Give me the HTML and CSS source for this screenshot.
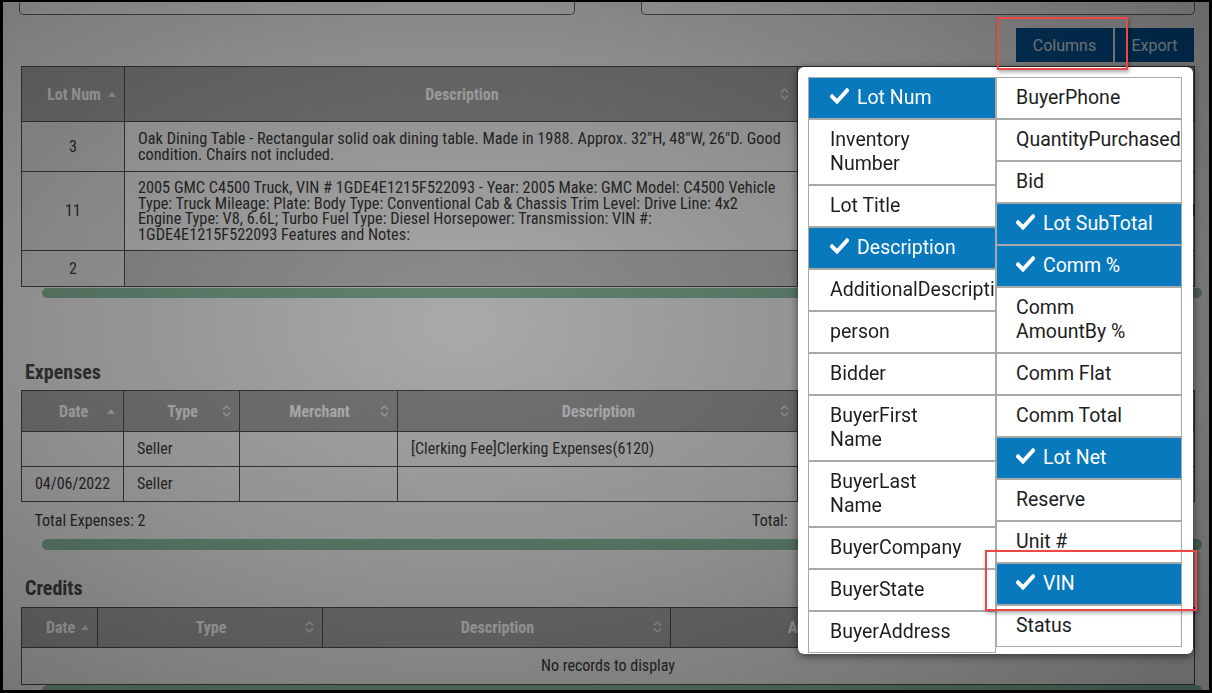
FILE: index.html
```html
<!DOCTYPE html>
<html lang="en">
<head>
    <meta charset="UTF-8">
    <title>Settlement - Lots</title>
    <link rel="stylesheet" href="styles.css">
</head>
<body>
    <div class="page">
        <div class="filters">
            <div class="filter-box filter-left"></div>
            <div class="filter-box filter-right"></div>
        </div>

        <div class="toolbar">
            <button class="tool-btn btn-columns">Columns</button>
            <button class="tool-btn btn-export">Export</button>
        </div>

        <!-- lots grid -->
        <table class="grid-table lots">
            <colgroup>
                <col style="width: 103px">
                <col style="width: 673px">
                <col style="width: 100px">
                <col style="width: 98px">
                <col style="width: 100px">
                <col>
            </colgroup>
            <thead>
                <tr>
                    <th class="sorted"><div class="th-in"><span></span><span>Lot Num</span><span class="sort-asc"></span></div></th>
                    <th><div class="th-in"><span></span><span>Description</span><svg class="sort-both" viewBox="0 0 9 14"><path d="M1 5.5 4.5 2 8 5.5M1 8.5 4.5 12 8 8.5"/></svg></div></th>
                    <th><div class="th-in"><span></span><span>Lot SubTotal</span><svg class="sort-both" viewBox="0 0 9 14"><path d="M1 5.5 4.5 2 8 5.5M1 8.5 4.5 12 8 8.5"/></svg></div></th>
                    <th><div class="th-in"><span></span><span>Comm %</span><svg class="sort-both" viewBox="0 0 9 14"><path d="M1 5.5 4.5 2 8 5.5M1 8.5 4.5 12 8 8.5"/></svg></div></th>
                    <th><div class="th-in"><span></span><span>Lot Net</span><svg class="sort-both" viewBox="0 0 9 14"><path d="M1 5.5 4.5 2 8 5.5M1 8.5 4.5 12 8 8.5"/></svg></div></th>
                    <th><div class="th-in"><span></span><span>VIN</span><svg class="sort-both" viewBox="0 0 9 14"><path d="M1 5.5 4.5 2 8 5.5M1 8.5 4.5 12 8 8.5"/></svg></div></th>
                </tr>
            </thead>
            <tbody>
                <tr class="row-short">
                    <td class="num sorted-cell">3</td>
                    <td class="desc">Oak Dining Table - Rectangular solid oak dining table. Made in 1988. Approx. 32"H, 48"W, 26"D. Good condition. Chairs not included.</td>
                    <td class="money">$450.00</td>
                    <td class="money">10</td>
                    <td class="money">$405.00</td>
                    <td></td>
                </tr>
                <tr class="row-long">
                    <td class="num sorted-cell">11</td>
                    <td class="desc">2005 GMC C4500 Truck, VIN # 1GDE4E1215F522093 - Year: 2005 Make: GMC Model: C4500 Vehicle Type: Truck Mileage: Plate: Body Type: Conventional Cab &amp; Chassis Trim Level: Drive Line: 4x2 Engine Type: V8, 6.6L; Turbo Fuel Type: Diesel Horsepower: Transmission: VIN #: 1GDE4E1215F522093 Features and Notes:</td>
                    <td class="money">$12,500.00</td>
                    <td class="money">10</td>
                    <td class="money">$11,250.00</td>
                    <td>1GDE4E1215F522093</td>
                </tr>
                <tr class="row-empty">
                    <td class="num sorted-cell">2</td>
                    <td class="pending"></td>
                    <td class="pending"></td>
                    <td class="pending"></td>
                    <td class="pending"></td>
                    <td class="pending"></td>
                </tr>
            </tbody>
        </table>
        <div class="hscroll"></div>

        <!-- expenses -->
        <h3 class="section-title expenses-title">Expenses</h3>
        <table class="grid-table expenses">
            <colgroup>
                <col style="width: 102px">
                <col style="width: 116px">
                <col style="width: 158px">
                <col style="width: 400px">
                <col>
            </colgroup>
            <thead>
                <tr>
                    <th class="sorted"><div class="th-in"><span></span><span>Date</span><span class="sort-asc"></span></div></th>
                    <th><div class="th-in"><span></span><span>Type</span><svg class="sort-both" viewBox="0 0 9 14"><path d="M1 5.5 4.5 2 8 5.5M1 8.5 4.5 12 8 8.5"/></svg></div></th>
                    <th><div class="th-in"><span></span><span>Merchant</span><svg class="sort-both" viewBox="0 0 9 14"><path d="M1 5.5 4.5 2 8 5.5M1 8.5 4.5 12 8 8.5"/></svg></div></th>
                    <th><div class="th-in"><span></span><span>Description</span><svg class="sort-both" viewBox="0 0 9 14"><path d="M1 5.5 4.5 2 8 5.5M1 8.5 4.5 12 8 8.5"/></svg></div></th>
                    <th><div class="th-in"><span></span><span>Amount</span><svg class="sort-both" viewBox="0 0 9 14"><path d="M1 5.5 4.5 2 8 5.5M1 8.5 4.5 12 8 8.5"/></svg></div></th>
                </tr>
            </thead>
            <tbody>
                <tr>
                    <td class="num"></td>
                    <td>Seller</td>
                    <td></td>
                    <td>[Clerking Fee]Clerking Expenses(6120)</td>
                    <td class="money">$25.00</td>
                </tr>
                <tr>
                    <td class="num">04/06/2022</td>
                    <td>Seller</td>
                    <td></td>
                    <td></td>
                    <td class="money">$40.00</td>
                </tr>
            </tbody>
            <tfoot>
                <tr>
                    <td colspan="3">Total Expenses: 2</td>
                    <td class="money">Total:</td>
                    <td class="money">$65.00</td>
                </tr>
            </tfoot>
        </table>
        <div class="hscroll"></div>

        <!-- credits -->
        <h3 class="section-title credits-title">Credits</h3>
        <table class="grid-table credits">
            <colgroup>
                <col style="width: 76px">
                <col style="width: 225px">
                <col style="width: 348px">
                <col style="width: 282px">
                <col>
            </colgroup>
            <thead>
                <tr>
                    <th class="sorted"><div class="th-in"><span></span><span>Date</span><span class="sort-asc"></span></div></th>
                    <th><div class="th-in"><span></span><span>Type</span><svg class="sort-both" viewBox="0 0 9 14"><path d="M1 5.5 4.5 2 8 5.5M1 8.5 4.5 12 8 8.5"/></svg></div></th>
                    <th><div class="th-in"><span></span><span>Description</span><svg class="sort-both" viewBox="0 0 9 14"><path d="M1 5.5 4.5 2 8 5.5M1 8.5 4.5 12 8 8.5"/></svg></div></th>
                    <th><div class="th-in"><span></span><span>Amount</span><svg class="sort-both" viewBox="0 0 9 14"><path d="M1 5.5 4.5 2 8 5.5M1 8.5 4.5 12 8 8.5"/></svg></div></th>
                    <th><div class="th-in"><span></span><span>Applied</span><svg class="sort-both" viewBox="0 0 9 14"><path d="M1 5.5 4.5 2 8 5.5M1 8.5 4.5 12 8 8.5"/></svg></div></th>
                </tr>
            </thead>
            <tbody>
                <tr>
                    <td colspan="5" class="no-records">No records to display</td>
                </tr>
            </tbody>
        </table>
        <div class="hscroll"></div>
    </div>

    <!-- modal backdrop behind the column chooser -->
    <div class="backdrop"></div>

    <div class="column-menu">
        <div class="menu-col col-a">
            <div class="menu-item on"><svg class="tick" viewBox="0 0 19 16"><path d="M2 8.5 7 13.5 17 2.5"/></svg><span>Lot Num</span></div>
            <div class="menu-item">Inventory Number</div>
            <div class="menu-item">Lot Title</div>
            <div class="menu-item on"><svg class="tick" viewBox="0 0 19 16"><path d="M2 8.5 7 13.5 17 2.5"/></svg><span>Description</span></div>
            <div class="menu-item">AdditionalDescription</div>
            <div class="menu-item">person</div>
            <div class="menu-item">Bidder</div>
            <div class="menu-item">BuyerFirst Name</div>
            <div class="menu-item">BuyerLast Name</div>
            <div class="menu-item">BuyerCompany</div>
            <div class="menu-item">BuyerState</div>
            <div class="menu-item">BuyerAddress</div>
        </div>
        <div class="menu-col col-b">
            <div class="menu-item">BuyerPhone</div>
            <div class="menu-item">QuantityPurchased</div>
            <div class="menu-item">Bid</div>
            <div class="menu-item on"><svg class="tick" viewBox="0 0 19 16"><path d="M2 8.5 7 13.5 17 2.5"/></svg><span>Lot SubTotal</span></div>
            <div class="menu-item on"><svg class="tick" viewBox="0 0 19 16"><path d="M2 8.5 7 13.5 17 2.5"/></svg><span>Comm %</span></div>
            <div class="menu-item">Comm AmountBy %</div>
            <div class="menu-item">Comm Flat</div>
            <div class="menu-item">Comm Total</div>
            <div class="menu-item on"><svg class="tick" viewBox="0 0 19 16"><path d="M2 8.5 7 13.5 17 2.5"/></svg><span>Lot Net</span></div>
            <div class="menu-item">Reserve</div>
            <div class="menu-item">Unit #</div>
            <div class="menu-item on"><svg class="tick" viewBox="0 0 19 16"><path d="M2 8.5 7 13.5 17 2.5"/></svg><span>VIN</span></div>
            <div class="menu-item">Status</div>
        </div>
    </div>

    <!-- highlight frames -->
    <div class="callout callout-columns"></div>
    <div class="callout callout-vin"></div>
</body>
</html>
```

FILE: styles.css
```css
* {
    box-sizing: border-box;
}
body {
    margin: 0;
    background: #f3f3f3;
    font-family: "Roboto Condensed", "Liberation Sans Narrow", "Arial Narrow", Roboto, sans-serif;
    color: #3a3a3a;
    overflow: hidden;
}
.page {
    padding: 0 17px 0 21px;
}

/* filter inputs cut off at the top */
.filters {
    display: flex;
    justify-content: space-between;
    margin-left: -2px;
}
.filter-box {
    height: 15px;
    background: #fbfbfb;
    border: 1px solid #6a6a6a;
    border-top: none;
    border-radius: 0 0 5px 5px;
}
.filter-left {
    width: 556px;
}
.filter-right {
    width: 554px;
}

.toolbar {
    display: flex;
    justify-content: flex-end;
    gap: 2px;
    margin-top: 13px;
    margin-right: 1px;
}
.tool-btn {
    height: 34px;
    border: none;
    background: #03569a;
    color: #e2e9f2;
    font-family: Roboto, sans-serif;
    font-size: 16px;
    padding: 0;
}
.btn-columns {
    width: 97px;
}
.btn-export {
    width: 79px;
}

/* grids */
.grid-table {
    width: 1174px;
    border-collapse: collapse;
    table-layout: fixed;
}
.lots {
    margin-top: 4px;
}
.grid-table th {
    background: #a7a7a7;
    color: #fff;
    font-size: 16px;
    font-weight: 700;
    border: 1px solid #4f4f4f;
    padding: 0 8px 0 10px;
}
.lots th {
    height: 55px;
}
.expenses th {
    height: 41px;
}
.credits th {
    height: 40px;
}
.th-in {
    display: grid;
    grid-template-columns: 1fr auto 1fr;
    align-items: center;
    white-space: nowrap;
}
.sort-asc {
    justify-self: end;
    width: 0;
    height: 0;
    border-left: 4px solid transparent;
    border-right: 4px solid transparent;
    border-bottom: 5px solid #e8e8e8;
}
.sort-both {
    justify-self: end;
    width: 9px;
    height: 14px;
    fill: none;
    stroke: #e4e4e4;
    stroke-width: 1.4;
}
.grid-table td {
    border: 1px solid #4f4f4f;
    background: #f3f3f3;
    font-size: 16px;
    line-height: 15.5px;
    padding: 8px 10px 8px 13px;
    vertical-align: middle;
    overflow: hidden;
}
.grid-table td.desc {
    font-size: 16.3px;
    padding-right: 14px;
}
.grid-table td.num {
    text-align: center;
    padding: 0 4px;
}
.grid-table td.sorted-cell {
    background: #e5e5e5;
}
.grid-table td.money {
    text-align: right;
}
.grid-table td.pending {
    background: #cbcbcb;
}
.lots .row-short td {
    height: 50px;
}
.lots .row-empty td {
    height: 36px;
}
.expenses td {
    height: 35px;
    padding-top: 0;
    padding-bottom: 0;
}
.expenses tfoot td {
    border: none;
    background: transparent;
    height: 37px;
}
.credits td.no-records {
    height: 37px;
    text-align: center;
    padding: 0;
}

.hscroll {
    height: 11px;
    width: 1160px;
    margin-left: 21px;
    border-radius: 6px;
    background: #8cbda1;
}
.lots + .hscroll {
    height: 10px;
    margin-top: 1px;
}

.section-title {
    margin: 0;
    font-size: 20px;
    line-height: 20px;
    font-weight: 700;
    color: #4a4a4a;
    padding-left: 4px;
}
.expenses-title {
    margin-top: 64px;
    margin-bottom: 8px;
}
.credits-title {
    margin-top: 28px;
    margin-bottom: 9px;
}

/* backdrop with vignette */
.backdrop {
    position: fixed;
    inset: 0;
    z-index: 10;
    border: 3px solid #000;
    border-top-width: 2px;
    background: radial-gradient(ellipse 75% 80% at 38% 47%, rgba(0,0,0,0.30) 0%, rgba(0,0,0,0.42) 50%, rgba(0,0,0,0.57) 100%);
}

/* column chooser popup */
.column-menu {
    position: absolute;
    left: 798px;
    top: 67px;
    width: 395px;
    height: 587px;
    z-index: 20;
    display: grid;
    grid-template-columns: 188px 186px;
    align-items: start;
    padding: 10px 0 0 10px;
    background: #fff;
    border-radius: 6px;
    box-shadow: 0 2px 9px rgba(0,0,0,0.55);
    overflow: hidden;
    font-family: Roboto, sans-serif;
    font-size: 19.5px;
    color: #1e1e1e;
}
.menu-col {
    display: flex;
    flex-direction: column;
}
.menu-item {
    display: flex;
    align-items: flex-start;
    gap: 8px;
    border: 1px solid #a9a9a9;
    background: #fff;
    line-height: 24px;
    padding: 8px 20px;
}
.col-a .menu-item {
    padding-left: 21px;
    padding-right: 27px;
    overflow: hidden;
}
.col-b .menu-item {
    padding-left: 19px;
    padding-right: 24px;
}
.menu-item.on {
    background: #0879bd;
    color: #fff;
}
.tick {
    flex: none;
    width: 19px;
    height: 16px;
    margin-top: 2px;
    fill: none;
    stroke: #fff;
    stroke-width: 4;
    stroke-linecap: square;
}

.callout {
    position: absolute;
    z-index: 30;
    border: 2px solid #ec4846;
    box-shadow: 1px 2px 4px rgba(0,0,0,0.35);
}
.callout-columns {
    left: 997px;
    top: 17px;
    width: 131px;
    height: 53px;
}
.callout-vin {
    left: 985px;
    top: 550px;
    width: 212px;
    height: 61px;
}
```
